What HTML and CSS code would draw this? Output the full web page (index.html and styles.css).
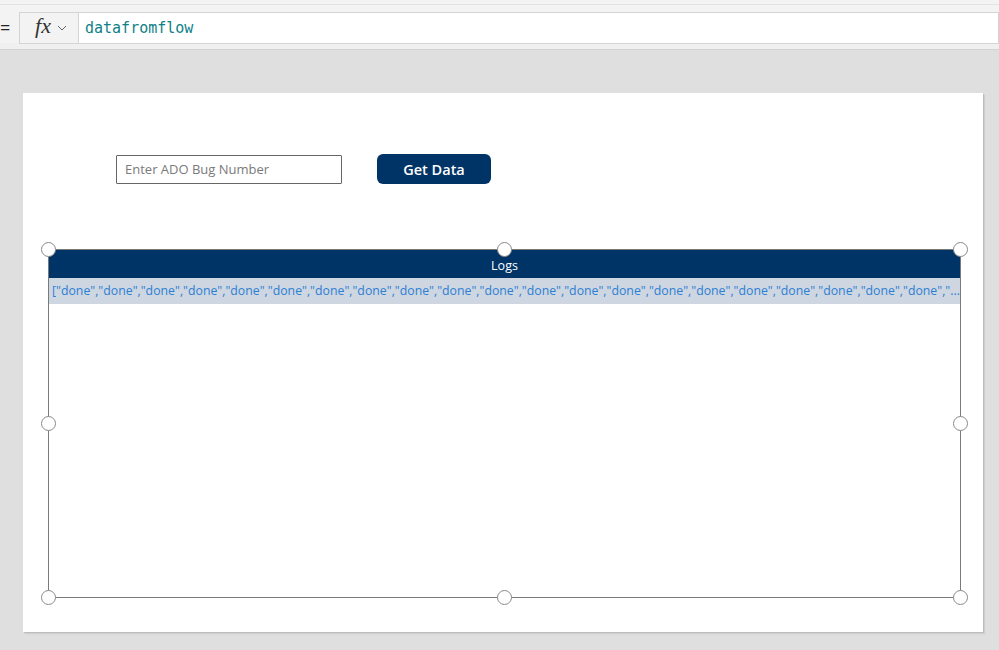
FILE: index.html
```html
<!DOCTYPE html>
<html lang="en">
<head>
    <meta charset="UTF-8">
    <meta name="viewport" content="width=device-width, initial-scale=1.0">
    <title>Power Apps - datafromflow</title>
    <link rel="stylesheet" href="styles.css">
</head>
<body>
    <!-- formula bar -->
    <div class="topbar">
        <span class="equals">=</span>
        <div class="fx-box">
            <span class="fx">fx</span>
            <svg class="chevron" width="10" height="6" viewBox="0 0 10 6"><path d="M1 1 L5 5 L9 1" fill="none" stroke="#666" stroke-width="1"/></svg>
        </div>
        <div class="formula">datafromflow</div>
    </div>

    <div class="workspace">
        <div class="screen">
            <div class="controls">
                <input type="text" class="bug-input" placeholder="Enter ADO Bug Number">
                <button class="button">Get Data</button>
            </div>

            <div class="gallery">
                <div class="gallery-header">Logs</div>
                <div class="gallery-row">["done","done","done","done","done","done","done","done","done","done","done","done","done","done","done","done","done","done","done","done","done","...</div>

                <span class="handle h-tl"></span>
                <span class="handle h-tm"></span>
                <span class="handle h-tr"></span>
                <span class="handle h-ml"></span>
                <span class="handle h-mr"></span>
                <span class="handle h-bl"></span>
                <span class="handle h-bm"></span>
                <span class="handle h-br"></span>
            </div>
        </div>
    </div>
</body>
</html>
```

FILE: styles.css
```css
body {
    font-family: "Open Sans", Arial, sans-serif;
    background-color: #dfdfdf;
    margin: 0;
    height: 650px;
    overflow: hidden;
}

/* Formula bar */
.topbar {
    position: relative;
    display: flex;
    align-items: center;
    height: 39px;
    background: #f3f3f3;
    border-top: 4px solid #f3f3f3;
    border-bottom: 6px solid #f0f0f0;
    box-shadow: inset 0 1px 0 #e2e2e2;
}
.topbar::after {
    content: "";
    position: absolute;
    left: 0;
    right: 0;
    bottom: -7px;
    height: 1px;
    background: #d2d2d2;
}
.equals {
    width: 19px;
    font-size: 18px;
    color: #222;
    padding-top: 6px;
    line-height: 1;
}
.fx-box {
    display: flex;
    align-items: center;
    justify-content: center;
    gap: 6px;
    width: 58px;
    height: 30px;
    margin-top: 8px;
    background: #f3f3f3;
    border: 1px solid #d4d4d4;
}
.fx {
    font-family: "Liberation Serif", serif;
    font-style: italic;
    font-size: 22px;
    color: #333;
    line-height: 1;
    margin-bottom: 3px;
    margin-left: 4px;
}
.formula {
    flex: 1;
    height: 30px;
    margin-top: 8px;
    background: #fff;
    border: 1px solid #d4d4d4;
    border-left: none;
    font-family: "DejaVu Sans Mono", monospace;
    font-size: 15px;
    color: #0e8088;
    line-height: 31px;
    padding-left: 6px;
}

/* Canvas */
.workspace {
    padding: 44px 0 0 23px;
}
.screen {
    width: 960px;
    height: 539px;
    background: #fff;
    box-shadow: 1px 1px 0 #bdbdbd, 2px 2px 1px #cfcfcf;
    padding: 61px 0 0 25px;
    box-sizing: border-box;
}

.controls {
    display: flex;
    align-items: center;
    gap: 35px;
    margin-left: 68px;
}
.bug-input {
    width: 226px;
    height: 29px;
    box-sizing: border-box;
    border: 1px solid #666;
    border-radius: 1px;
    padding: 0 8px;
    font-family: "Open Sans", Arial, sans-serif;
    font-size: 13px;
    color: #333;
    outline: none;
}
.bug-input::placeholder {
    color: #7a7a7a;
}
.button {
    width: 114px;
    height: 30px;
    background-color: #003366;
    color: white;
    border: none;
    border-radius: 6px;
    font-family: "Open Sans", Arial, sans-serif;
    font-size: 14.5px;
    font-weight: 600;
    cursor: pointer;
}

/* Gallery */
.gallery {
    position: relative;
    width: 913px;
    height: 349px;
    margin-top: 65px;
    border: 1px solid #7a7a7a;
    box-sizing: border-box;
}
.gallery-header {
    height: 28px;
    background: #003366;
    color: #fff;
    font-size: 12.5px;
    line-height: 31px;
    text-align: center;
}
.gallery-row {
    height: 26px;
    background: #cdd6e1;
    color: #2d7fd3;
    font-size: 12.3px;
    line-height: 26px;
    padding-left: 3px;
    white-space: nowrap;
    overflow: hidden;
}

.handle {
    position: absolute;
    width: 13px;
    height: 13px;
    background: #fff;
    border: 1px solid #8a8a8a;
    border-radius: 50%;
}
.h-tl { left: -8px; top: -8px; }
.h-tm { left: 448px; top: -8px; }
.h-tr { right: -8px; top: -8px; }
.h-ml { left: -8px; top: 166px; }
.h-mr { right: -8px; top: 166px; }
.h-bl { left: -8px; bottom: -8px; }
.h-bm { left: 448px; bottom: -8px; }
.h-br { right: -8px; bottom: -8px; }
```
